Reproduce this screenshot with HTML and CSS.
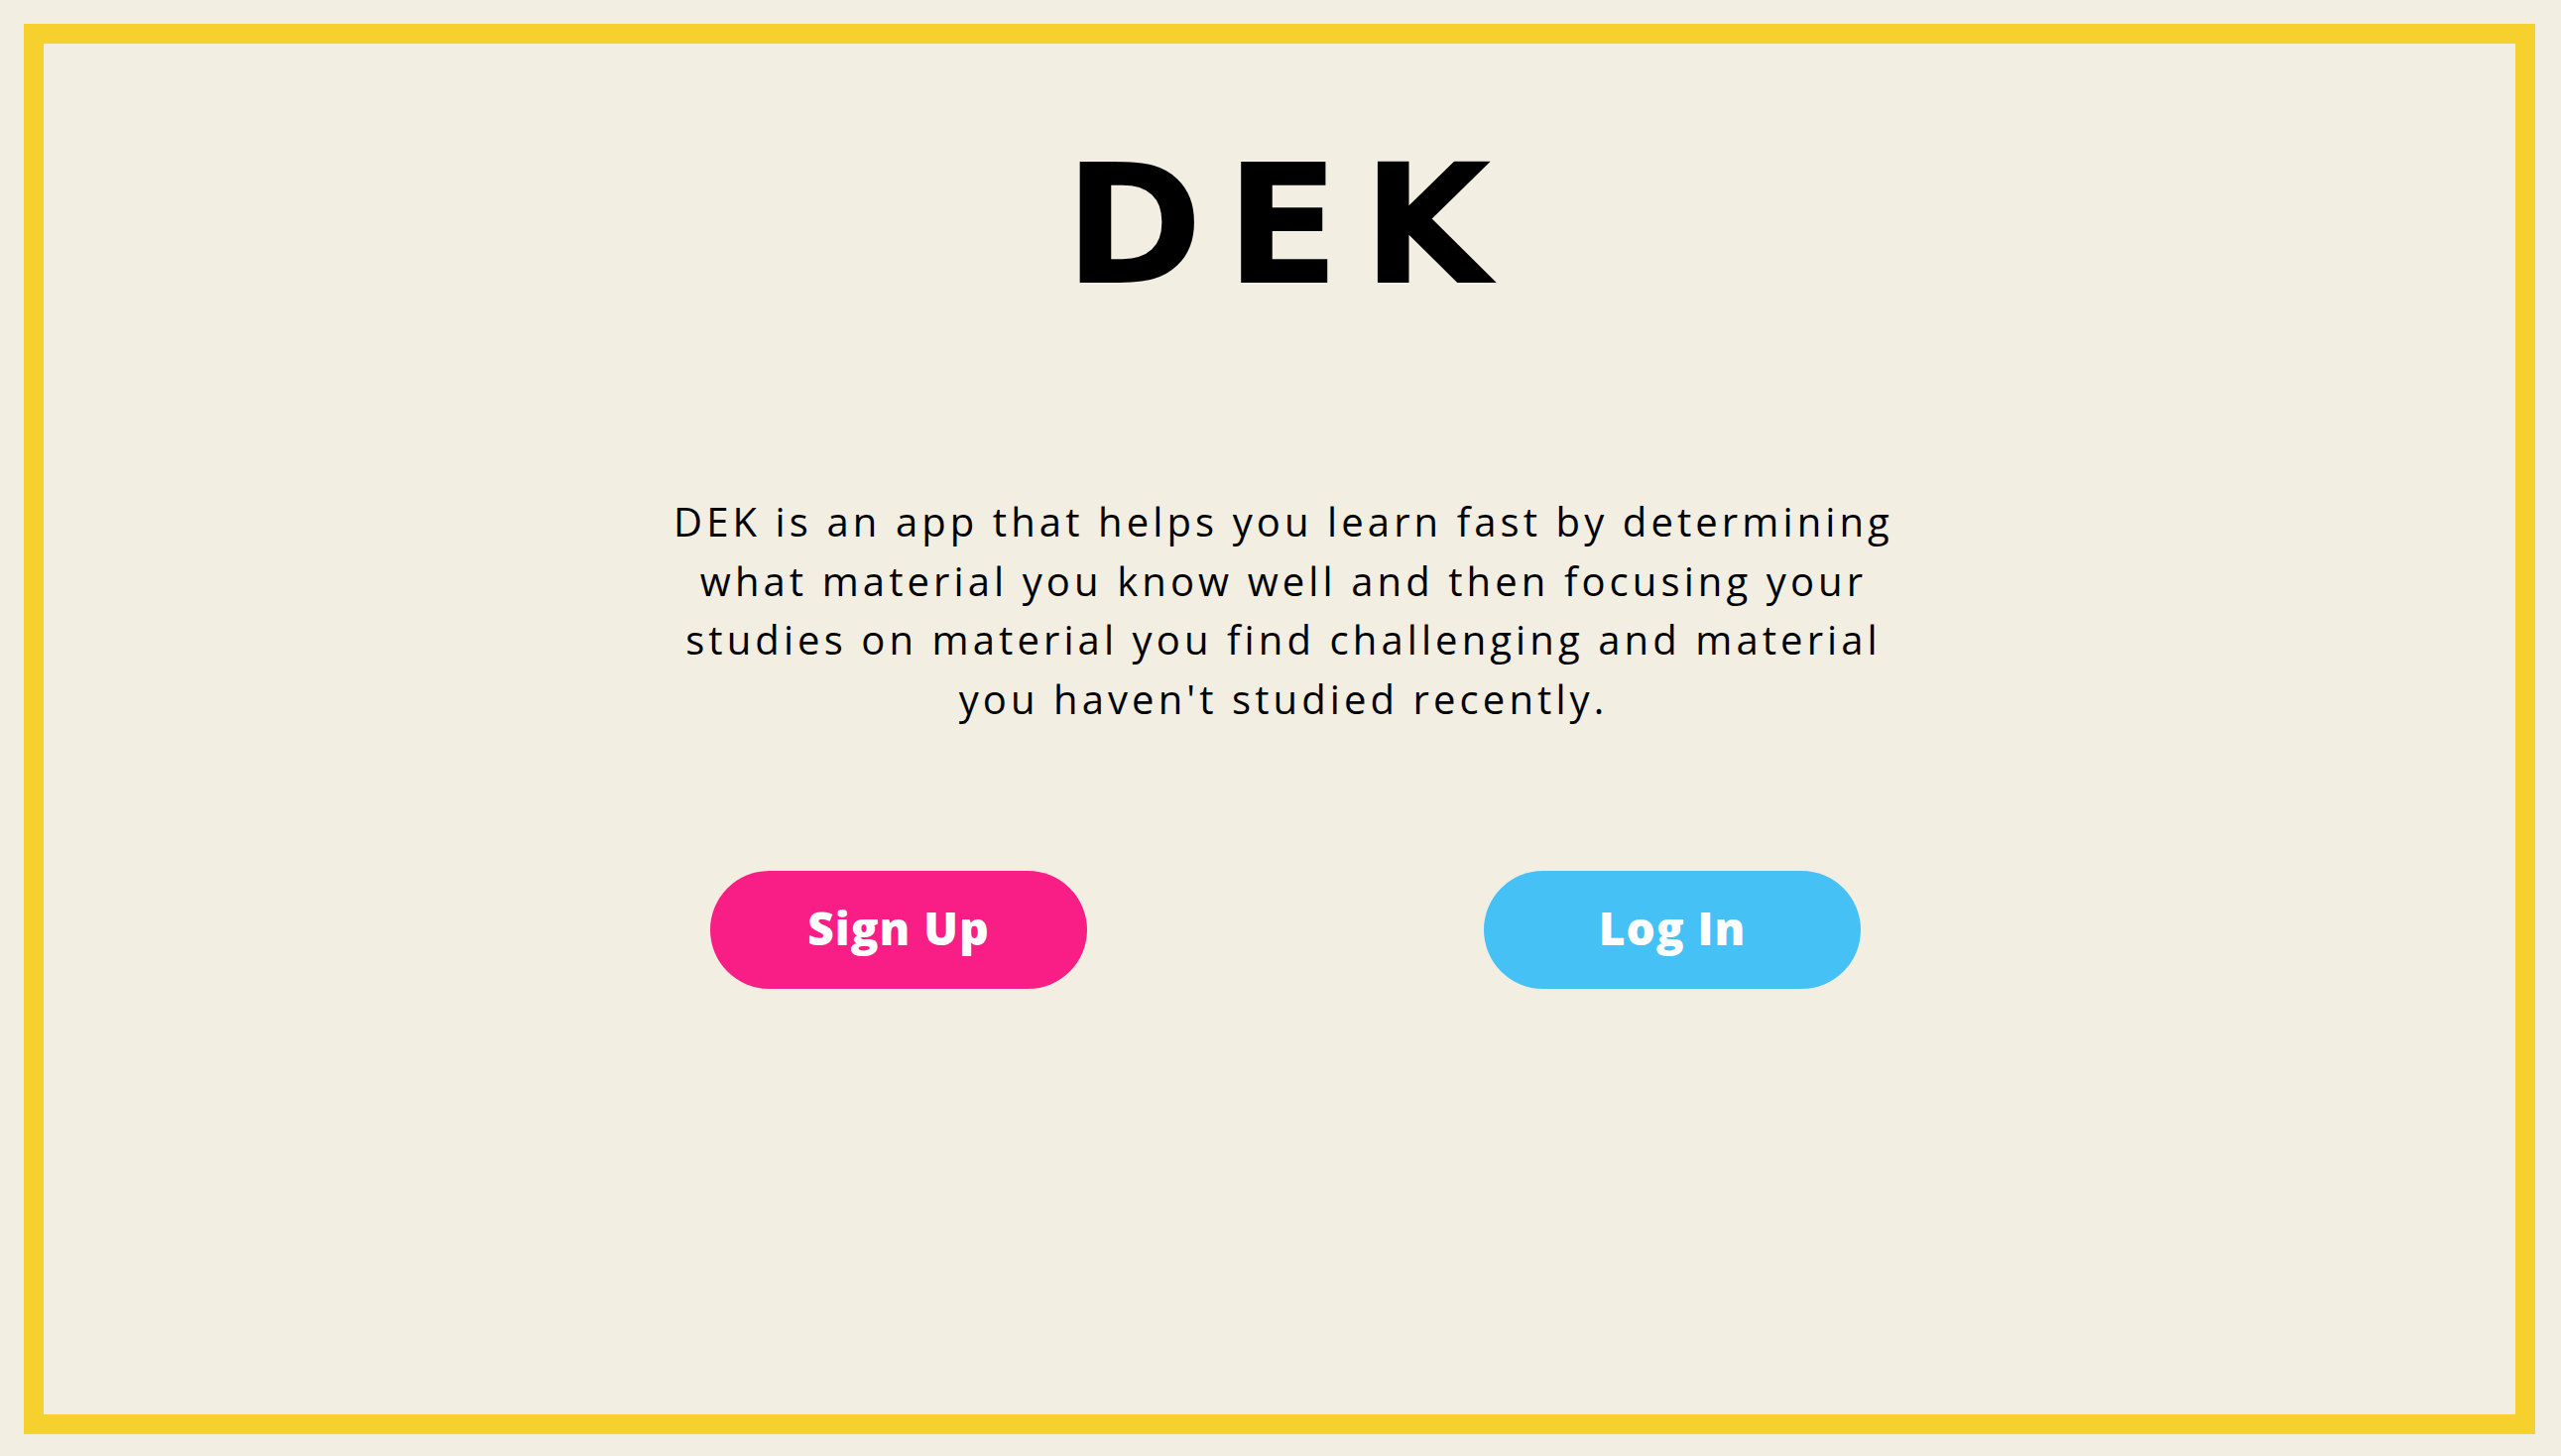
FILE: index.html
```html
<!DOCTYPE html>
<html lang="en">
<head>
<meta charset="utf-8">
<title>DEK</title>
<link rel="stylesheet" href="styles.css">
</head>
<body>
<main class="frame">
  <h1 class="logo">DEK</h1>
  <p class="intro">DEK is an app that helps you learn fast by determining<br>what material you know well and then focusing your<br>studies on material you find challenging and material<br>you haven't studied recently.</p>
  <div class="actions">
    <a class="btn btn-signup" href="#">Sign Up</a>
    <a class="btn btn-login" href="#">Log In</a>
  </div>
</main>
</body>
</html>
```

FILE: styles.css
```css
html, body {
  margin: 0;
  padding: 0;
  background: #f2eee2;
}

body {
  width: 2582px;
  height: 1468px;
  overflow: hidden;
}

.frame {
  box-sizing: border-box;
  margin: 24px 26px 0 24px;
  height: 1422px;
  border: 20px solid #f6d02c;
  display: flex;
  flex-direction: column;
  align-items: center;
  padding-top: 99px;
  padding-left: 8px;
}

.logo {
  margin: 0 -12px 0 0;
  font-family: "DejaVu Sans", "Liberation Sans", sans-serif;
  font-weight: 700;
  font-size: 168px;
  line-height: 1;
  letter-spacing: 23px;
  color: #000;
}

.intro {
  margin: 185px 0 0 0;
  font-family: "Open Sans", "Liberation Sans", sans-serif;
  font-weight: 400;
  font-size: 40px;
  line-height: 59.5px;
  letter-spacing: 4.1px;
  text-align: center;
  color: #000;
}

.actions {
  display: flex;
  gap: 400px;
  margin-top: 144px;
  margin-left: 4px;
}

.btn {
  box-sizing: border-box;
  display: flex;
  align-items: center;
  justify-content: center;
  width: 380px;
  height: 119px;
  padding-bottom: 5px;
  border-radius: 60px;
  font-family: "Open Sans", "Liberation Sans", sans-serif;
  font-weight: 800;
  font-size: 46px;
  letter-spacing: 1px;
  color: #fff;
  text-decoration: none;
}

.btn-signup {
  background: #f91e85;
}

.btn-login {
  background: #46c1f6;
}
```
